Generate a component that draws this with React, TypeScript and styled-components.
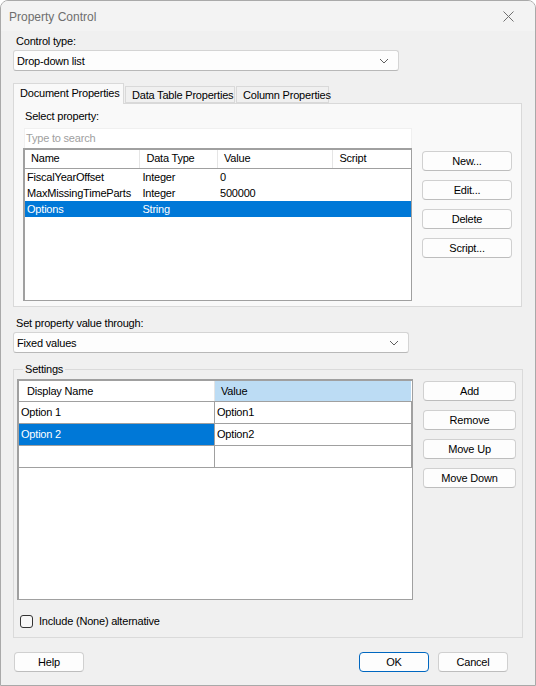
import React from 'react';
import styled, { createGlobalStyle } from 'styled-components';

const GlobalStyle = createGlobalStyle`
  html, body {
    margin: 0;
    padding: 0;
    background: #ffffff;
  }
  body {
    font-family: "Liberation Sans", Arial, sans-serif;
    font-size: 11px;
    letter-spacing: -0.2px;
    color: #000;
  }
`;

type Property = {
  name: string,
  dataType: string,
  value: string,
  selected?: boolean
}

type OptionRow = {
  display: string,
  value: string,
  selected?: boolean
}

const properties: Property[] = [
  { name: 'FiscalYearOffset', dataType: 'Integer', value: '0' },
  { name: 'MaxMissingTimeParts', dataType: 'Integer', value: '500000' },
  { name: 'Options', dataType: 'String', value: '', selected: true },
];

const options: OptionRow[] = [
  { display: 'Option 1', value: 'Option1' },
  { display: 'Option 2', value: 'Option2', selected: true },
  { display: '', value: '' },
];

const Chevron = () => (
  <svg width="10" height="6" viewBox="0 0 10 6">
    <path d="M1 1 L5 5 L9 1" fill="none" stroke="#5f5f5f" strokeWidth="1" />
  </svg>
);

const CloseIcon = () => (
  <svg width="11" height="11" viewBox="0 0 11 11">
    <path d="M0.5 0.5 L10.5 10.5 M10.5 0.5 L0.5 10.5" stroke="#707070" strokeWidth="1" />
  </svg>
);

const App: React.FC = () => {
  return (
    <>
      <GlobalStyle />
      <Window>
        <TitleBar>
          <Title>Property Control</Title>
          <CloseButton><CloseIcon /></CloseButton>
        </TitleBar>
        <Body>
          <FieldLabel>Control type:</FieldLabel>
          <Select $width={386}>
            <span>Drop-down list</span>
            <Chevron />
          </Select>

          <TabStrip>
            <Tab $selected $width={111}>Document Properties</Tab>
            <Tab $width={110}>Data Table Properties</Tab>
            <Tab $width={93}>Column Properties</Tab>
          </TabStrip>
          <TabPanel>
            <PanelLabel>Select property:</PanelLabel>
            <PanelRow>
              <ListColumn>
                <Search>Type to search</Search>
                <PropTable>
                  <PropHeader>
                    <HeadCell $width={116}>Name</HeadCell>
                    <HeadCell $width={78}>Data Type</HeadCell>
                    <HeadCell $width={116}>Value</HeadCell>
                    <HeadCell $width={78} $last>Script</HeadCell>
                  </PropHeader>
                  {properties.map((p) => (
                    <PropRow key={p.name} $selected={p.selected}>
                      <PropCell $width={116}>{p.name}</PropCell>
                      <PropCell $width={78}>{p.dataType}</PropCell>
                      <PropCell $width={116}>{p.value}</PropCell>
                      <PropCell $width={78}></PropCell>
                    </PropRow>
                  ))}
                </PropTable>
              </ListColumn>
              <ButtonColumn $top={23}>
                <Button $width={90}>New...</Button>
                <Button $width={90}>Edit...</Button>
                <Button $width={90}>Delete</Button>
                <Button $width={90}>Script...</Button>
              </ButtonColumn>
            </PanelRow>
          </TabPanel>

          <FieldLabel $top={9}>Set property value through:</FieldLabel>
          <Select $width={396}>
            <span>Fixed values</span>
            <Chevron />
          </Select>

          <GroupBox>
            <Legend>Settings</Legend>
            <GroupRow>
              <Grid>
                <GridHeader>
                  <GridHeadCell $width={196}>Display Name</GridHeadCell>
                  <GridHeadCell $width={196} $active>Value</GridHeadCell>
                </GridHeader>
                {options.map((o, i) => (
                  <GridRow key={i}>
                    <GridCell $width={196} $selected={o.selected}>{o.display}</GridCell>
                    <GridCell $width={196}>{o.value}</GridCell>
                  </GridRow>
                ))}
              </Grid>
              <ButtonColumn $top={2}>
                <Button $width={93}>Add</Button>
                <Button $width={93}>Remove</Button>
                <Button $width={93}>Move Up</Button>
                <Button $width={93}>Move Down</Button>
              </ButtonColumn>
            </GroupRow>
            <CheckRow>
              <CheckBox />
              <span>Include (None) alternative</span>
            </CheckRow>
          </GroupBox>

          <Footer>
            <Button $width={70}>Help</Button>
            <FooterRight>
              <Button $width={70} $primary>OK</Button>
              <Button $width={70}>Cancel</Button>
            </FooterRight>
          </Footer>
        </Body>
      </Window>
    </>
  );
};

const Window = styled.div`
  width: 536px;
  height: 686px;
  box-sizing: border-box;
  background: #f0f0f0;
  border: 1px solid #a9a9a9;
  border-radius: 8px 8px 0 0;
  display: flex;
  flex-direction: column;
  overflow: hidden;
`;

const TitleBar = styled.div`
  height: 30px;
  display: flex;
  align-items: center;
  justify-content: space-between;
  padding: 0 21px 0 8px;
  background: #f3f3f3;
  flex-shrink: 0;
`;

const Title = styled.div`
  font-size: 12px;
  letter-spacing: 0;
  color: #6e6e6e;
  margin-top: 2px;
`;

const CloseButton = styled.div`
  display: flex;
  align-items: center;
`;

const Body = styled.div`
  display: flex;
  flex-direction: column;
  padding: 0 14px 0 12px;
`;

const FieldLabel = styled.div<{ $top?: number }>`
  height: 14px;
  line-height: 14px;
  margin: ${(p) => p.$top ?? 3}px 0 2px 3px;
`;

const Select = styled.div<{ $width: number }>`
  width: ${(p) => p.$width}px;
  height: 21px;
  box-sizing: border-box;
  background: #fdfdfd;
  border: 1px solid #d4d4d4;
  border-bottom-color: #b8b8b8;
  border-radius: 3px;
  display: flex;
  align-items: center;
  justify-content: space-between;
  padding: 0 9px 0 3px;
`;

const TabStrip = styled.div`
  display: flex;
  align-items: flex-end;
  margin-top: 11px;
  height: 21px;
`;

const Tab = styled.div<{ $selected?: boolean, $width: number }>`
  position: relative;
  z-index: 1;
  width: ${(p) => p.$width}px;
  box-sizing: border-box;
  height: ${(p) => (p.$selected ? 21 : 17)}px;
  margin-bottom: ${(p) => (p.$selected ? -1 : 0)}px;
  margin-right: 1px;
  padding: ${(p) => (p.$selected ? '3px 0 0 6px' : '2px 0 0 6px')};
  background: ${(p) => (p.$selected ? '#f9f9f9' : '#f0f0f0')};
  border: 1px solid #d9d9d9;
  border-bottom: ${(p) => (p.$selected ? 'none' : '1px solid #d9d9d9')};
  white-space: nowrap;
`;

const TabPanel = styled.div`
  width: 509px;
  height: 204px;
  box-sizing: border-box;
  background: #f9f9f9;
  border: 1px solid #d9d9d9;
  padding: 5px 0 0 9px;
  display: flex;
  flex-direction: column;
`;

const PanelLabel = styled.div`
  height: 14px;
  line-height: 14px;
  margin-left: 2px;
  margin-bottom: 5px;
`;

const PanelRow = styled.div`
  display: flex;
  gap: 10px;
`;

const ListColumn = styled.div`
  display: flex;
  flex-direction: column;
`;

const Search = styled.div`
  width: 388px;
  height: 20px;
  box-sizing: border-box;
  margin-left: 1px;
  background: #ffffff;
  border: 1px solid #f0f0f0;
  border-bottom: none;
  color: #a0a0a0;
  padding: 3px 0 0 1px;
`;

const PropTable = styled.div`
  width: 389px;
  height: 153px;
  box-sizing: border-box;
  background: #ffffff;
  border: 1px solid #a0a0a0;
  border-top: 2px solid #a0a0a0;
  border-left: 2px solid #a0a0a0;
`;

const PropHeader = styled.div`
  display: flex;
  height: 18px;
  border-bottom: 1px solid #a0a0a0;
  background: #ffffff;
`;

const HeadCell = styled.div<{ $width: number, $last?: boolean }>`
  width: ${(p) => p.$width}px;
  box-sizing: border-box;
  padding: 2px 0 0 6px;
  border-right: ${(p) => (p.$last ? 'none' : '1px solid #e5e5e5')};
  white-space: nowrap;
`;

const PropRow = styled.div<{ $selected?: boolean }>`
  display: flex;
  height: 16px;
  line-height: 16px;
  background: ${(p) => (p.$selected ? '#0078d7' : 'transparent')};
  color: ${(p) => (p.$selected ? '#ffffff' : '#000000')};
`;

const PropCell = styled.div<{ $width: number }>`
  width: ${(p) => p.$width}px;
  box-sizing: border-box;
  padding-left: 2px;
  white-space: nowrap;
`;

const ButtonColumn = styled.div<{ $top: number }>`
  display: flex;
  flex-direction: column;
  gap: 9px;
  padding-top: ${(p) => p.$top}px;
`;

const Button = styled.div<{ $width: number, $primary?: boolean }>`
  width: ${(p) => p.$width}px;
  height: 20px;
  box-sizing: border-box;
  background: #fdfdfd;
  border: 1px solid ${(p) => (p.$primary ? '#0067c0' : '#d0d0d0')};
  border-bottom-color: ${(p) => (p.$primary ? '#0067c0' : '#bdbdbd')};
  border-radius: 4px;
  display: flex;
  align-items: center;
  justify-content: center;
`;

const GroupBox = styled.fieldset`
  width: 510px;
  box-sizing: border-box;
  margin: 9px 0 0 0;
  padding: 3px 0 9px 3px;
  border: 1px solid #dadada;
  display: flex;
  flex-direction: column;
`;

const Legend = styled.legend`
  padding: 0 2px;
  margin-left: 6px;
  line-height: 14px;
`;

const GroupRow = styled.div`
  display: flex;
  gap: 10px;
`;

const Grid = styled.div`
  width: 396px;
  height: 221px;
  box-sizing: border-box;
  background: #ffffff;
  border: 1px solid #a0a0a0;
  border-top: 2px solid #a0a0a0;
  border-left: 2px solid #a0a0a0;
`;

const GridHeader = styled.div`
  display: flex;
  height: 20px;
  border-bottom: 1px solid #a0a0a0;
`;

const GridHeadCell = styled.div<{ $width: number, $active?: boolean }>`
  width: ${(p) => p.$width}px;
  box-sizing: border-box;
  padding: 4px 0 0 ${(p) => (p.$active ? 6 : 8)}px;
  background: ${(p) => (p.$active ? '#bcdcf4' : '#ffffff')};
  border-right: 1px solid ${(p) => (p.$active ? '#bcdcf4' : '#e5e5e5')};
`;

const GridRow = styled.div`
  display: flex;
  height: 22px;
  box-sizing: border-box;
  border-bottom: 1px solid #a0a0a0;
  width: 393px;
  border-right: 1px solid #a0a0a0;
`;

const GridCell = styled.div<{ $width: number, $selected?: boolean }>`
  width: ${(p) => p.$width}px;
  box-sizing: border-box;
  padding: 4px 0 0 2px;
  background: ${(p) => (p.$selected ? '#0078d7' : '#ffffff')};
  color: ${(p) => (p.$selected ? '#ffffff' : '#000000')};
  border-right: 1px solid #a0a0a0;
  &:last-child {
    border-right: none;
  }
`;

const CheckRow = styled.div`
  display: flex;
  align-items: center;
  gap: 6px;
  height: 14px;
  margin: 14px 0 0 3px;
`;

const CheckBox = styled.div`
  width: 13px;
  height: 13px;
  box-sizing: border-box;
  border: 1px solid #333333;
  border-radius: 3px;
  background: #f7f7f7;
`;

const Footer = styled.div`
  display: flex;
  justify-content: space-between;
  margin: 14px 13px 0 1px;
`;

const FooterRight = styled.div`
  display: flex;
  gap: 9px;
`;

export default App;
